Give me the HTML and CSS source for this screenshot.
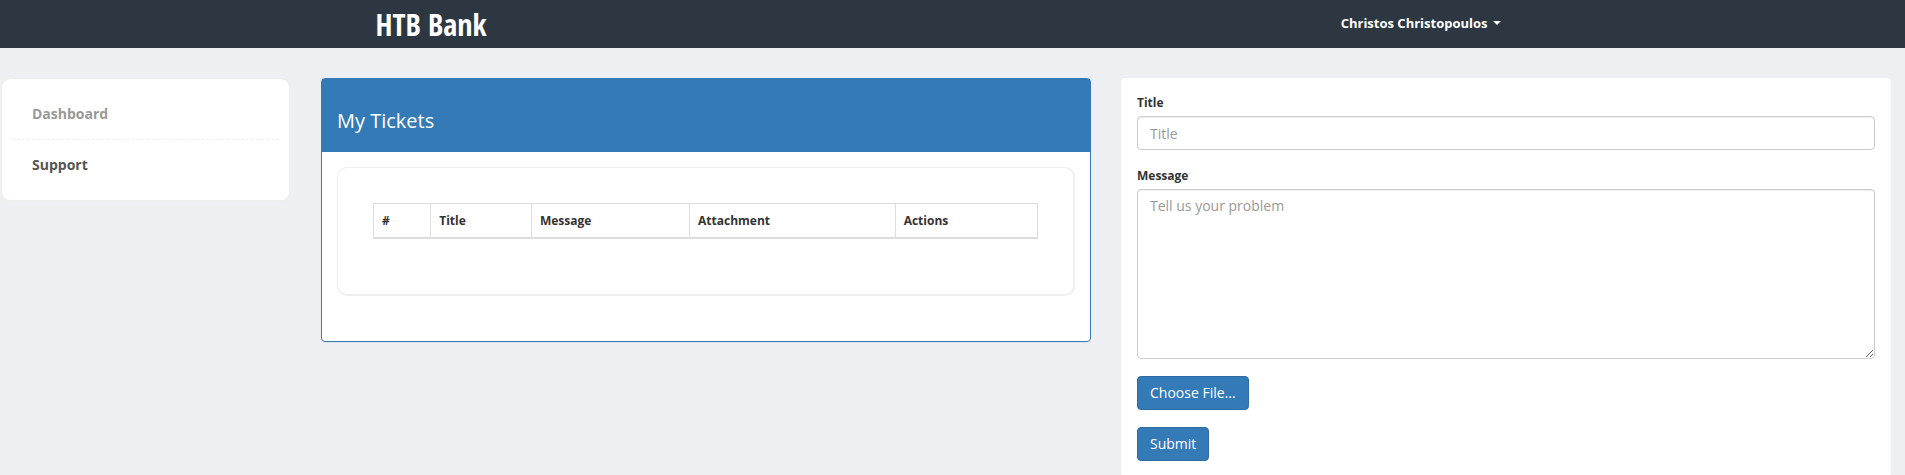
FILE: index.html
```html
<!DOCTYPE html>
<html lang="en">
<head>
<meta charset="utf-8">
<title>HTB Bank - Support</title>
<link rel="stylesheet" href="styles.css">
</head>
<body>
<header class="header">
  <div class="header-inner">
    <h1 class="logo"><a href="#">HTB Bank</a></h1>
    <button class="user-menu" type="button" aria-haspopup="true">Christos Christopoulos <span class="caret"></span></button>
  </div>
</header>
<div class="page">
  <nav class="content-box sidebar">
    <ul class="side-nav">
      <li><a href="#">Dashboard</a></li>
      <li class="current"><a href="#">Support</a></li>
    </ul>
  </nav>
  <main class="panel panel-primary">
    <div class="panel-heading"><h2 class="panel-title">My Tickets</h2></div>
    <div class="panel-body">
      <div class="content-box tickets">
        <table class="table">
          <thead>
            <tr><th>#</th><th>Title</th><th>Message</th><th>Attachment</th><th>Actions</th></tr>
          </thead>
          <tbody></tbody>
        </table>
      </div>
    </div>
  </main>
  <form class="panel ticket-form">
    <div class="form-group">
      <label for="title">Title</label>
      <input class="form-control" id="title" type="text" placeholder="Title">
    </div>
    <div class="form-group">
      <label for="message">Message</label>
      <textarea class="form-control message" id="message" placeholder="Tell us your problem"></textarea>
    </div>
    <button class="btn" type="button">Choose File...</button>
    <button class="btn" type="submit">Submit</button>
  </form>
</div>
</body>
</html>
```
FILE: styles.css
```css
*, *::before, *::after { box-sizing: border-box; }

body {
  margin: 0;
  background: #eeeff3;
  color: #333;
  font: 12px/17px "Open Sans", sans-serif;
}

.header { background: #2c3742; }
.header-inner {
  display: flex;
  align-items: center;
  justify-content: space-between;
  max-width: 1170px;
  height: 48px;
  margin: 0 auto;
  padding: 0 37px 0 8px;
}
.logo { margin: 0; padding-top: 2px; font: bold 30px/40px "Open Sans Condensed", "Open Sans", sans-serif; }
.logo a { color: #fff; text-decoration: none; }
.user-menu {
  display: flex;
  align-items: center;
  gap: 5px;
  padding: 0 0 2px;
  border: 0;
  background: none;
  color: #fff;
  font: bold 13px/20px "Open Sans", sans-serif;
}
.caret {
  border-top: 4px solid #fff;
  border-right: 4px solid transparent;
  border-left: 4px solid transparent;
}

.page {
  display: grid;
  grid-template-columns: minmax(0, 290fr) minmax(0, 770fr) minmax(0, 770fr);
  gap: 30px;
  align-items: start;
  padding: 30px 14px 30px 1px;
}

.content-box {
  border: 1px solid #eee;
  border-right-width: 2px;
  border-bottom-width: 2px;
  border-radius: 10px;
  background: #fff;
}

.sidebar { padding: 10px; }
.side-nav { margin: 0; padding: 0; list-style: none; }
.side-nav li + li { border-top: 1px dashed #eee; }
.side-nav a {
  display: block;
  padding: 15px 20px;
  color: #999;
  font: bold 14px/20px "Open Sans", sans-serif;
  text-decoration: none;
}
.side-nav .current a { color: #555; }

.panel {
  border: 1px solid transparent;
  border-radius: 4px;
  background: #fff;
  box-shadow: 0 1px 1px rgba(0, 0, 0, .05);
}
.panel-primary { border-color: #337ab7; }
.panel-heading { padding: 31px 15px 20px; background: #337ab7; color: #fff; }
.panel-title { margin: 0; font: 20px/22px "Open Sans", sans-serif; }
.panel-body { padding: 15px; }

.tickets { margin-bottom: 30px; padding: 35px; }
.table { width: 100%; margin-bottom: 20px; border: 1px solid #ddd; border-collapse: collapse; }
.table th { padding: 8px; border: 1px solid #ddd; border-bottom-width: 2px; text-align: left; }

.ticket-form { display: flex; flex-direction: column; align-items: flex-start; gap: 17px; padding: 15px; }
.form-group { display: flex; flex-direction: column; gap: 5px; width: 100%; }
.form-group label { font-weight: bold; }
.form-control {
  width: 100%;
  height: 34px;
  padding: 6px 12px;
  border: 1px solid #ccc;
  border-radius: 4px;
  background: #fff;
  box-shadow: inset 0 1px 1px rgba(0, 0, 0, .075);
  color: #555;
  font: 14px/20px "Open Sans", sans-serif;
}
.form-control::placeholder { color: #999; opacity: 1; }
.message { height: 170px; resize: vertical; }
.btn {
  padding: 6px 12px;
  border: 1px solid #2e6da4;
  border-radius: 4px;
  background: #337ab7;
  color: #fff;
  font: 14px/20px "Open Sans", sans-serif;
}
```
